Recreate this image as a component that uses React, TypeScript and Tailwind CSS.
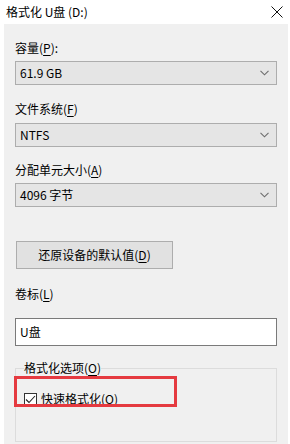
import React from 'react'

const font = { fontFamily: '"Noto Sans CJK SC", "Noto Sans", sans-serif' }

function Key({ k }: { k: string }) {
  return <span className="underline underline-offset-2 decoration-[1px]">{k}</span>
}

function Chevron() {
  return (
    <svg width="9" height="6" viewBox="0 0 9 6" className="shrink-0">
      <path d="M0.5 0.8 L4.5 4.8 L8.5 0.8" fill="none" stroke="#6d6d6d" strokeWidth="1.1" />
    </svg>
  )
}

function Select({ value }: { value: string }) {
  return (
    <div className="h-[24px] mx-[11px] bg-[#e5e5e5] border border-[#adadad] flex items-center justify-between pl-[4px] pr-[7px] text-[12px] text-black">
      <span>{value}</span>
      <Chevron />
    </div>
  )
}

function Label({ children, className = '' }: { children: React.ReactNode; className?: string }) {
  return <div className={`h-[16px] leading-[16px] px-[11px] text-[12px] text-black ${className}`}>{children}</div>
}

export default function App() {
  return (
    <div className="w-[290px] h-[444px] bg-white overflow-hidden flex flex-col" style={font}>
      {/* title bar */}
      <div className="h-[24px] flex items-center justify-between pl-[6px] pr-[7px] shrink-0">
        <span className="text-[12px] text-black">格式化 U盘 (D:)</span>
        <svg width="12" height="12" viewBox="0 0 12 12">
          <path d="M0.5 0.5 L11.5 11.5 M11.5 0.5 L0.5 11.5" stroke="#111" strokeWidth="1" />
        </svg>
      </div>

      <div className="flex-1 bg-[#f0f0f0] ml-[4px] mr-[2px] pt-[16px] flex flex-col">
        <Label>容量(<Key k="P" />):</Label>
        <div className="mt-[5px]">
          <Select value="61.9 GB" />
        </div>

        <Label className="mt-[16px]">文件系统(<Key k="F" />)</Label>
        <div className="mt-[6px]">
          <Select value="NTFS" />
        </div>

        <Label className="mt-[15px]">分配单元大小(<Key k="A" />)</Label>
        <div className="mt-[5px]">
          <Select value="4096 字节" />
        </div>

        <div className="mt-[34px] mx-[12px]">
          <div className="w-[157px] h-[28px] bg-[#e1e1e1] border border-[#adadad] flex items-center justify-center text-[12px] text-black">
            还原设备的默认值(<Key k="D" />)
          </div>
        </div>

        <Label className="mt-[17px]">卷标(<Key k="L" />)</Label>
        <div className="mt-[16px] mx-[11px] h-[28px] bg-white border border-[#7a7a7a] flex items-center pl-[4px] text-[12px] text-black">
          U盘
        </div>

        <fieldset className="mt-[14px] mx-[11px] border border-[#dcdcdc] px-[8px] pb-[34px] relative">
          <legend className="text-[12px] leading-[16px] text-black">
            格式化选项(<Key k="O" />)
          </legend>
          <div className="mt-[15px] h-[16px] flex items-center gap-[4px] text-[12px] text-black">
            <div className="w-[13px] h-[13px] bg-white border border-[#333] flex items-center justify-center">
              <svg width="11" height="9" viewBox="0 0 11 9">
                <path d="M1 4.5 L4 7.5 L10 1" fill="none" stroke="#222" strokeWidth="1.1" />
              </svg>
            </div>
            <span>
              快速格式化(<Key k="Q" />)
            </span>
          </div>
          {/* red highlight annotation */}
          <div className="absolute left-[-2px] top-[0px] w-[163px] h-[31px] border-[3px] border-[#e53a40]" />
        </fieldset>
      </div>
    </div>
  )
}
